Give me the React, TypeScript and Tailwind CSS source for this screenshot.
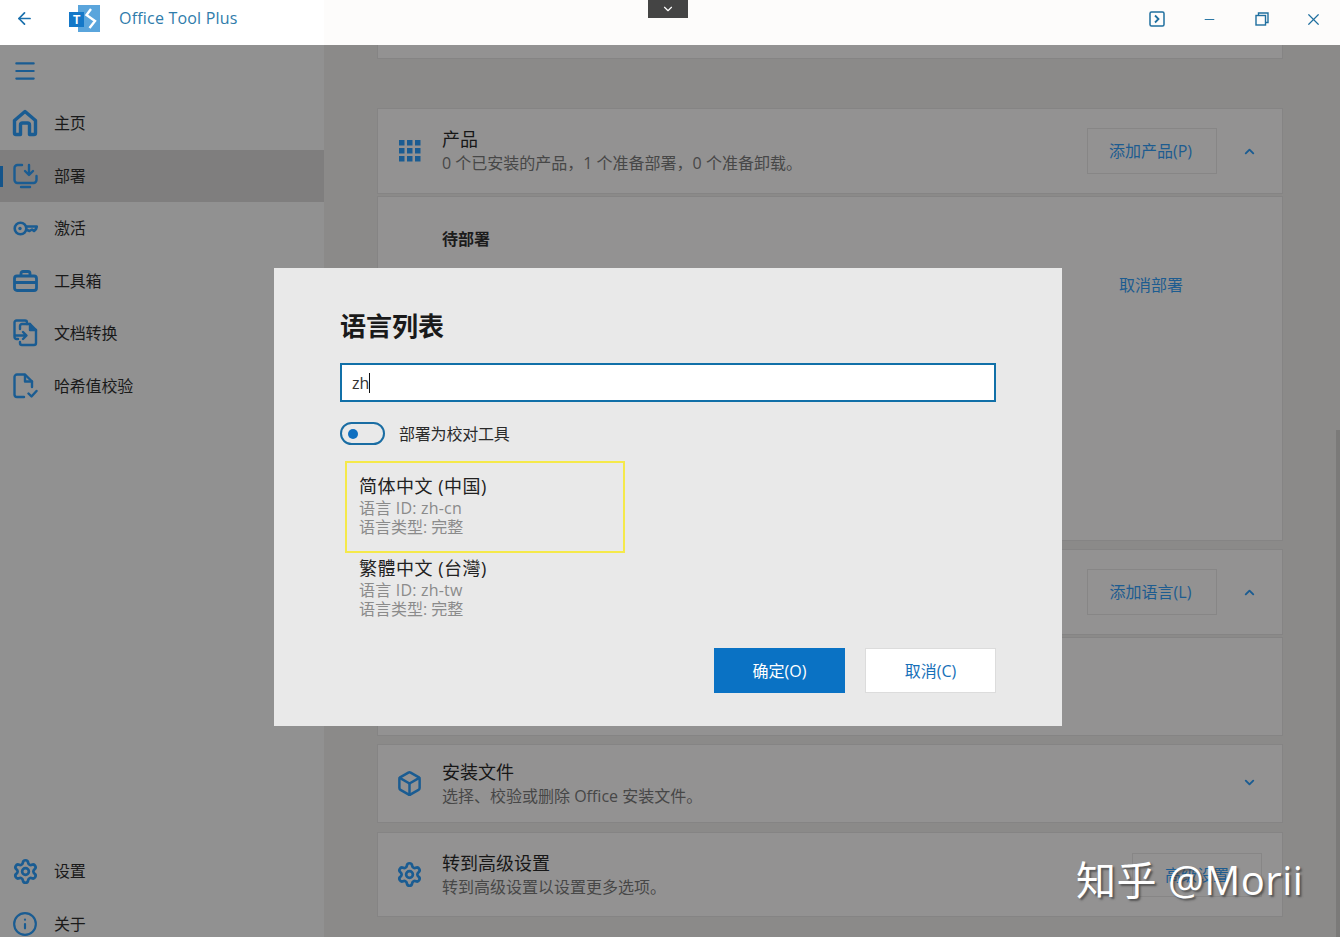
import React from "react";
import { ArrowLeft, ChevronDown, ChevronUp, Info, Minus, X, Settings, Box, Menu } from "lucide-react";

const iconBlue = "#1a5c92";

function HomeIcon() {
  return (
    <svg width="26" height="28" viewBox="0 0 26 28" fill="none" stroke={iconBlue} strokeWidth="3.4" strokeLinejoin="round">
      <path d="M2.5 11.5 L13 2.5 L23.5 11.5 V24 a1.5 1.5 0 0 1 -1.5 1.5 H17.5 V16 a2 2 0 0 0 -2 -2 H10.5 a2 2 0 0 0 -2 2 V25.5 H4 a1.5 1.5 0 0 1 -1.5 -1.5 Z" />
    </svg>
  );
}
function DeployIcon() {
  return (
    <svg width="25" height="26" viewBox="0 0 25 26" fill="none" stroke={iconBlue} strokeWidth="2.4" strokeLinecap="round" strokeLinejoin="round">
      <path d="M9 2 H4.5 a3 3 0 0 0 -3 3 V17 a3 3 0 0 0 3 3 H20.500 a3 3 0 0 0 3 -3 V13" />
      <path d="M16 2 V11 M12 8 L16 12 L20 8" />
      <path d="M8 24 H17" />
    </svg>
  );
}
function KeyIcon() {
  return (
    <svg width="25" height="15" viewBox="0 0 25 15" fill="none" stroke={iconBlue} strokeWidth="2.6" strokeLinecap="round" strokeLinejoin="round">
      <circle cx="7.500" cy="7.500" r="5.800" />
      <circle cx="7" cy="7.500" r="1.700" fill={iconBlue} stroke="none" />
      <path d="M13.500 5.500 H23.800 L23 8 L21 10 L19 8.500 L16.500 10 L14 9" />
    </svg>
  );
}
function ToolboxIcon() {
  return (
    <svg width="25" height="22" viewBox="0 0 25 22" fill="none" stroke={iconBlue} strokeWidth="2.8" strokeLinejoin="round">
      <path d="M8 6 V3.500 a2 2 0 0 1 2 -2 H15 a2 2 0 0 1 2 2 V6" />
      <rect x="1.500" y="6" width="22" height="14.500" rx="2.500" />
      <path d="M1.500 12.500 H23.500" strokeWidth="3" />
    </svg>
  );
}
function ConvertIcon() {
  return (
    <svg width="25" height="28" viewBox="0 0 25 28" fill="none" stroke={iconBlue} strokeWidth="2.4" strokeLinecap="round" strokeLinejoin="round">
      <path d="M5 20 H3.500 a2 2 0 0 1 -2 -2 V3.500 a2 2 0 0 1 2 -2 H12 a2 2 0 0 1 2 2 V5" />
      <path d="M7 10 V7 a2 2 0 0 1 2 -2 H17 L23 11 V24 a2 2 0 0 1 -2 2 H9 a2 2 0 0 1 -2 -2 V23" />
      <path d="M2 16.500 H13 M10 13 L13.500 16.500 L10 20" />
      <path d="M17 5 V11 H23" fill={iconBlue} />
    </svg>
  );
}
function HashIcon() {
  return (
    <svg width="25" height="26" viewBox="0 0 25 26" fill="none" stroke={iconBlue} strokeWidth="2.4" strokeLinecap="round" strokeLinejoin="round">
      <path d="M11 24 H4 a2.500 2.500 0 0 1 -2.500 -2.500 V4 A2.500 2.500 0 0 1 4 1.500 H12 L19 8.500 V14" />
      <path d="M12 2 V8.500 H19" />
      <path d="M15.500 20.500 L18.500 23.500 L23.500 18" />
    </svg>
  );
}
function GridIcon() {
  return (
    <svg width="22" height="22" viewBox="0 0 22 22" fill={iconBlue}>
      {[0, 8, 16].flatMap((y) =>
        [0, 8, 16].map((x) => <rect key={`${x}-${y}`} x={x} y={y} width="5.500" height="5.500" />),
      )}
    </svg>
  );
}
function Logo() {
  return (
    <svg width="31" height="27" viewBox="0 0 31 27">
      <rect x="9" y="0" width="22" height="27" fill="#5aa5dc" />
      <rect x="0" y="7" width="15" height="15" fill="#1478c8" />
      <text x="4" y="19" fontSize="12" fontWeight="700" fill="#fff" fontFamily="Liberation Sans, sans-serif">T</text>
      <path d="M22 4 L17.500 10 L26 16 L20.500 23" fill="none" stroke="#fff" strokeWidth="2.400" />
    </svg>
  );
}

function NavRow({ icon, label, active }: { icon: React.ReactNode; label: string; active?: boolean }) {
  return (
    <div className={`relative flex h-[52.5px] shrink-0 items-center ${active ? "bg-[#7f7e7e]" : ""}`}>
      {active && <div className="absolute left-0 top-[16px] h-[21px] w-[3px] bg-[#14548a]" />}
      <div className="flex w-[50px] shrink-0 justify-center">{icon}</div>
      <span className="ml-[4px] text-[16px] tracking-[-0.2px] text-[#1a1a1a]">{label}</span>
    </div>
  );
}

function Card({
  icon,
  title,
  sub,
  action,
  chevron,
  className,
}: {
  icon: React.ReactNode;
  title: string;
  sub: string;
  action?: React.ReactNode;
  chevron?: React.ReactNode;
  className: string;
}) {
  return (
    <div className={`flex items-center border border-[#858484] bg-[#939292] ${className}`}>
      <div className="flex w-[64px] shrink-0 justify-center pr-[1px]">{icon}</div>
      <div className="flex-1">
        <div className="text-[18px] leading-[24px] text-[#171717]">{title}</div>
        <div className="text-[16px] leading-[24px] text-[#474747]">{sub}</div>
      </div>
      {action}
      {chevron}
    </div>
  );
}

function OutlineButton({ label }: { label: string }) {
  return (
    <div className="flex h-[46px] w-[130px] items-center justify-center border border-[#878686] pr-[3px] text-[16px] text-[#1d5c90]">
      {label}
    </div>
  );
}

function LangItem({ name, id }: { name: string; id: string }) {
  return (
    <>
      <div className="text-[18px] leading-[24px] tracking-[0.5px] text-[#222]">{name}</div>
      <div className="text-[16px] leading-[20px] tracking-[0.2px] text-[#8b8b8b]">语言 ID: {id}</div>
      <div className="text-[16px] leading-[19px] text-[#8b8b8b]">语言类型: 完整</div>
    </>
  );
}

export default function App() {
  return (
    <div className="relative flex h-[937px] w-[1340px] flex-col overflow-hidden bg-[#8b8a89] font-['Open_Sans','Noto_Sans_CJK_SC',sans-serif]">
      {/* Title bar */}
      <header className="relative flex h-[45px] shrink-0 items-center bg-[#fdfcfb]">
        <div className="flex h-full w-[324px] items-center bg-white">
          <div className="flex w-[48px] justify-center">
            <ArrowLeft size={19} color="#1a70ad" strokeWidth={2.2} className="mb-[8px]" />
          </div>
          <div className="ml-[21px] mb-[8px]">
            <Logo />
          </div>
          <span className="ml-[19px] mb-[9px] text-[16px] tracking-[0.2px] text-[#2f7cab]">Office Tool Plus</span>
        </div>
        <div className="absolute left-[648px] top-0 flex h-[18px] w-[40px] items-center justify-center bg-[#444]">
          <ChevronDown size={14} color="#fff" strokeWidth={2} />
        </div>
        <div className="ml-auto mb-[7px] mr-[1px] flex items-center">
          <div className="flex w-[52px] justify-center">
            <svg width="16" height="16" viewBox="0 0 16 16" fill="none" stroke="#1f6f9f" strokeWidth="1.500">
              <rect x="1" y="1" width="14" height="14" rx="1.500" />
              <path d="M6 4.500 L9.500 8 L6 11.500" strokeWidth="1.800" />
            </svg>
          </div>
          <div className="flex w-[53px] justify-center">
            <Minus size={15} color="#1f6f9f" strokeWidth={1.500} />
          </div>
          <div className="flex w-[52px] justify-center">
            <svg width="14" height="14" viewBox="0 0 14 14" fill="none" stroke="#1f6f9f" strokeWidth="1.400">
              <rect x="1" y="3.500" width="9.500" height="9.500" />
              <path d="M3.500 3.500 V1 H13 V10.500 H10.500" />
            </svg>
          </div>
          <div className="flex w-[51px] justify-center">
            <X size={19} color="#1f6f9f" strokeWidth={1.500} />
          </div>
        </div>
      </header>

      <div className="flex min-h-0 flex-1">
        {/* Sidebar */}
        <aside className="flex w-[324px] shrink-0 flex-col overflow-hidden bg-[#919191]">
          <div className="flex h-[52px] shrink-0 items-center pl-[12px]">
            <Menu size={26} color={iconBlue} strokeWidth={2} />
          </div>
          <NavRow icon={<HomeIcon />} label="主页" />
          <NavRow icon={<DeployIcon />} label="部署" active />
          <NavRow icon={<KeyIcon />} label="激活" />
          <NavRow icon={<ToolboxIcon />} label="工具箱" />
          <NavRow icon={<ConvertIcon />} label="文档转换" />
          <NavRow icon={<HashIcon />} label="哈希值校验" />
          <div className="mt-[433px] shrink-0">
            <NavRow icon={<Settings size={27} color={iconBlue} strokeWidth={2.400} />} label="设置" />
            <NavRow icon={<Info size={26} color={iconBlue} strokeWidth={2} />} label="关于" />
          </div>
        </aside>

        {/* Main */}
        <main className="flex min-w-0 flex-1 flex-col overflow-hidden pl-[53px] pr-[57px]">
          <div className="h-[14px] shrink-0 border-b border-x border-[#858484] bg-[#939292]" />
          <Card
            className="mt-[49px] h-[86px] shrink-0"
            icon={<GridIcon />}
            title="产品"
            sub="0 个已安装的产品，1 个准备部署，0 个准备卸载。"
            action={<OutlineButton label="添加产品(P)" />}
            chevron={
              <div className="flex w-[65px] justify-center">
                <ChevronUp size={15} color={iconBlue} strokeWidth={3} />
              </div>
            }
          />
          <div className="mt-[2px] flex h-[345px] shrink-0 justify-between border border-[#858484] bg-[#939292] pl-[64px] pr-[99px] pt-[31px]">
            <span className="text-[16px] font-bold leading-[22px] text-[#1c1c1c]">待部署</span>
            <span className="mt-[46px] text-[16px] leading-[22px] text-[#1d5c90]">取消部署</span>
          </div>
          <Card
            className="mt-[8px] h-[86px] shrink-0"
            icon={<GridIcon />}
            title="语言"
            sub=""
            action={<OutlineButton label="添加语言(L)" />}
            chevron={
              <div className="flex w-[65px] justify-center">
                <ChevronUp size={15} color={iconBlue} strokeWidth={3} />
              </div>
            }
          />
          <div className="mt-[2px] h-[99px] shrink-0 border border-[#858484] bg-[#939292]" />
          <Card
            className="mt-[8px] h-[79px] shrink-0"
            icon={<Box size={27} color={iconBlue} strokeWidth={2.200} />}
            title="安装文件"
            sub="选择、校验或删除 Office 安装文件。"
            chevron={
              <div className="mb-[3px] flex w-[65px] justify-center">
                <ChevronDown size={15} color={iconBlue} strokeWidth={3} />
              </div>
            }
          />
          <Card
            className="mt-[9px] h-[85px] shrink-0"
            icon={<Settings size={27} color={iconBlue} strokeWidth={2.400} />}
            title="转到高级设置"
            sub="转到高级设置以设置更多选项。"
            action={
              <div className="mr-[20px] flex h-[44px] w-[130px] items-center justify-center border border-[#878686] text-[16px] text-[#1d5c90]">
                高级设置
              </div>
            }
          />
        </main>
      </div>

      {/* Scrollbar */}
      <div className="absolute bottom-0 right-0 top-[430px] w-[4px] bg-[#7b7a79]" />

      {/* Dialog */}
      <div className="absolute left-[274px] top-[268px] flex h-[458px] w-[788px] flex-col bg-[#e9e9e9] pl-[66px] pr-[66px] pt-[40px]">
        <h2 className="text-[26px] font-bold leading-[36px] text-[#1a1a1a]">语言列表</h2>
        <div className="mt-[19px] flex h-[39px] items-center border-2 border-[#1170a8] bg-white pl-[10px] text-[16px] text-[#333]">
          zh<span className="h-[20px] w-[1px] bg-[#111]" />
        </div>
        <div className="mt-[20px] flex h-[23px] items-center">
          <div className="flex h-[23px] w-[45px] items-center rounded-full border-2 border-[#1a6da3] pl-[6px]">
            <div className="h-[10px] w-[10px] rounded-full bg-[#0f6fc0]" />
          </div>
          <span className="ml-[14px] text-[16px] tracking-[-0.2px] text-[#2a2a2a]">部署为校对工具</span>
        </div>
        <div className="ml-[5px] mt-[16px] h-[92px] w-[280px] border-2 border-[#f5e94a] pl-[12px] pt-[11px]">
          <LangItem name="简体中文 (中国)" id="zh-cn" />
        </div>
        <div className="ml-[19px] mt-[3px]">
          <LangItem name="繁體中文 (台灣)" id="zh-tw" />
        </div>
        <div className="mt-[29px] flex justify-end gap-[20px]">
          <button className="h-[45px] w-[131px] bg-[#0a72c4] text-[16px] text-white">确定(O)</button>
          <button className="h-[45px] w-[131px] border border-[#dcdcdc] bg-white text-[16px] text-[#1770b8]">取消(C)</button>
        </div>
      </div>

      {/* Watermark */}
      <div className="absolute left-[1076px] top-[852px] whitespace-nowrap text-[40px] leading-[56px] tracking-[0.5px] text-white [text-shadow:2px_2px_2px_rgba(60,60,60,0.7)]">
        知乎 @Morii
      </div>
    </div>
  );
}
